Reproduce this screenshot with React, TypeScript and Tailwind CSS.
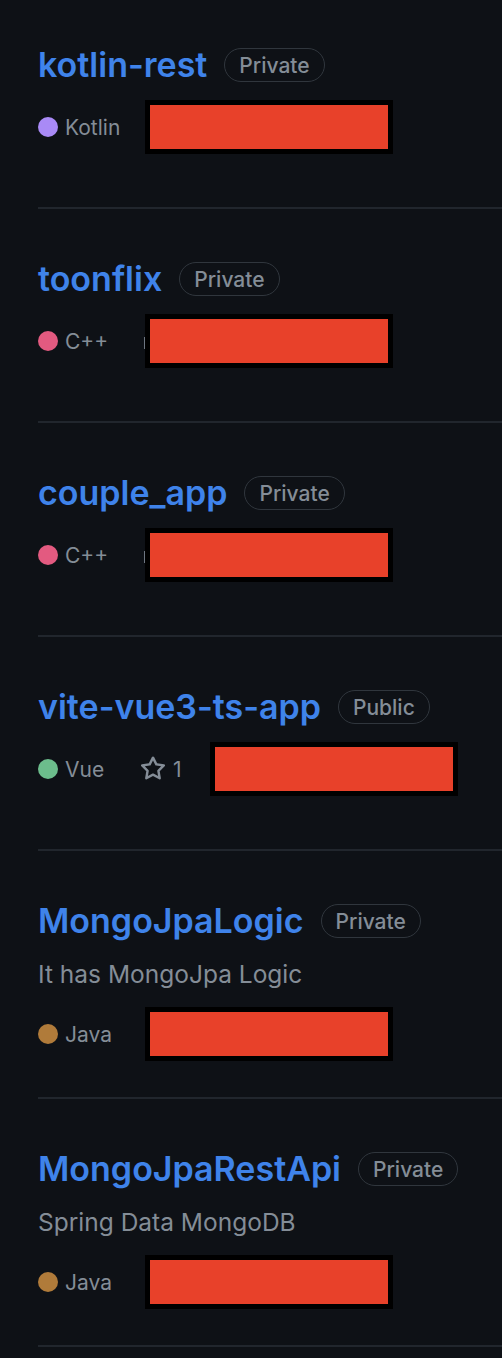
type Repo = {
  name: string
  visibility: 'Private' | 'Public'
  description?: string
  language: string
  dot: string
  stars?: number
  sliver?: boolean
}

const repos: Repo[] = [
  { name: 'kotlin-rest', visibility: 'Private', language: 'Kotlin', dot: 'bg-[#a98af6]' },
  { name: 'toonflix', visibility: 'Private', language: 'C++', dot: 'bg-[#e35a80]', sliver: true },
  { name: 'couple_app', visibility: 'Private', language: 'C++', dot: 'bg-[#e35a80]', sliver: true },
  { name: 'vite-vue3-ts-app', visibility: 'Public', language: 'Vue', dot: 'bg-[#6cbd8c]', stars: 1 },
  { name: 'MongoJpaLogic', visibility: 'Private', description: 'It has MongoJpa Logic', language: 'Java', dot: 'bg-[#b07b3a]' },
  { name: 'MongoJpaRestApi', visibility: 'Private', description: 'Spring Data MongoDB', language: 'Java', dot: 'bg-[#b07b3a]' },
]

function StarIcon() {
  return (
    <svg viewBox="0 0 16 16" width="26" height="26" fill="currentColor" aria-hidden="true">
      <path d="M8 .25a.75.75 0 0 1 .673.418l1.882 3.815 4.21.612a.75.75 0 0 1 .416 1.279l-3.046 2.97.719 4.192a.751.751 0 0 1-1.088.791L8 12.347l-3.766 1.98a.75.75 0 0 1-1.088-.79l.72-4.194L.818 6.374a.75.75 0 0 1 .416-1.28l4.21-.611L7.327.668A.75.75 0 0 1 8 .25Zm0 2.445L6.615 5.5a.75.75 0 0 1-.564.41l-3.097.45 2.24 2.184a.75.75 0 0 1 .216.664l-.528 3.084 2.769-1.456a.75.75 0 0 1 .698 0l2.77 1.456-.53-3.084a.75.75 0 0 1 .216-.664l2.24-2.183-3.096-.45a.75.75 0 0 1-.564-.41L8 2.694Z" />
    </svg>
  )
}

// manual redaction over the "Updated ..." text
function Redacted() {
  return (
    <div className="h-[54px] w-[248px] shrink-0 border-[5px] border-black bg-[#e8412a]" />
  )
}

function RepoItem({ repo, first }: { repo: Repo; first: boolean }) {
  const hasDesc = !!repo.description
  return (
    <li
      className={`ml-[38px] border-b-2 border-[#21262d] ${first ? 'pt-[45px]' : 'pt-[50px]'} ${hasDesc ? 'pb-[36px]' : 'pb-[53px]'}`}
    >
      <div className="flex h-10 items-center">
        <a className="text-[34px] font-semibold leading-10 text-[#3f83ea]">{repo.name}</a>
        <span className="ml-[17px] flex h-[34px] items-center rounded-full border border-[#30363d] px-[14px] text-[21px] leading-none font-medium text-[#848d97]">
          {repo.visibility}
        </span>
      </div>

      {hasDesc && (
        <p className="mt-4 h-[34px] text-[24.5px] leading-[34px] text-[#848d97]">{repo.description}</p>
      )}

      <div className={`flex h-[54px] items-center text-[21px] leading-none text-[#848d97] ${hasDesc ? 'mt-4' : 'mt-[15px]'}`}>
        <span className={`flex shrink-0 items-center gap-[7px] ${repo.stars ? 'w-[102px]' : repo.sliver ? 'w-[106px]' : 'w-[107px]'}`}>
          <span className={`h-5 w-5 shrink-0 rounded-full ${repo.dot}`} />
          <span>{repo.language}</span>
        </span>
        {repo.stars != null && (
          <span className="mr-[28px] flex items-center gap-[7px]">
            <StarIcon />
            <span>{repo.stars}</span>
          </span>
        )}
        {repo.sliver && <span className="mt-1 h-3 w-px bg-[#6e7681]" />}
        <Redacted />
      </div>
    </li>
  )
}

export default function App() {
  return (
    <div className="min-h-[1358px] w-[502px] overflow-hidden bg-[#0e1116] font-['Inter',sans-serif]">
      <ul>
        {repos.map((repo, i) => (
          <RepoItem key={repo.name} repo={repo} first={i === 0} />
        ))}
      </ul>
    </div>
  )
}
